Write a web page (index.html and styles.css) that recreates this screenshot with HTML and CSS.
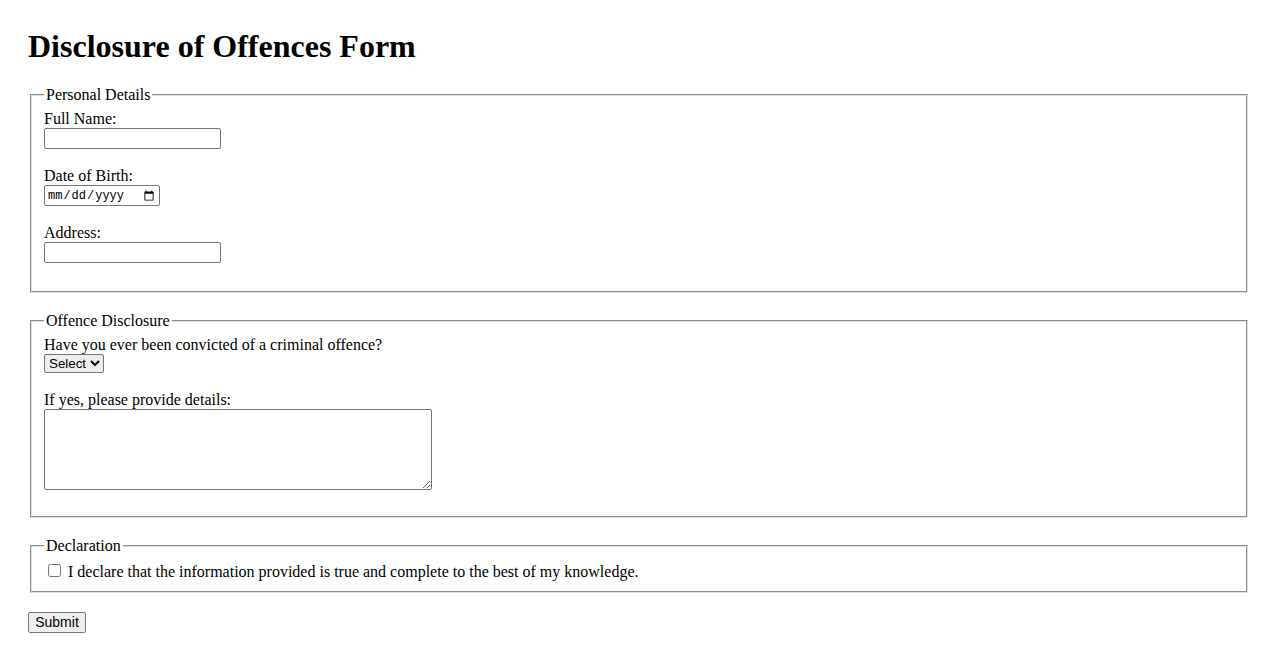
FILE: index.html
```html
<!DOCTYPE html>
<html lang="en">
<head>
<meta charset="utf-8">
<title>Disclosure of Offences Form</title>
<link rel="stylesheet" href="styles.css">
</head>
<body>
<h1 class="title">Disclosure of Offences Form</h1>
<form class="form">
  <fieldset class="group">
    <legend>Personal Details</legend>
    <label for="name">Full Name:</label><br>
    <input class="text-input" type="text" id="name"><br><br>
    <label for="dob">Date of Birth:</label><br>
    <input class="date-input" type="date" id="dob"><br><br>
    <label for="address">Address:</label><br>
    <input class="text-input" type="text" id="address"><br><br>
  </fieldset>
  <fieldset class="group group-offence">
    <legend>Offence Disclosure</legend>
    <label for="convicted">Have you ever been convicted of a criminal offence?</label><br>
    <select class="select" id="convicted">
      <option>Select</option>
      <option>Yes</option>
      <option>No</option>
    </select><br><br>
    <label for="details">If yes, please provide details:</label><br>
    <textarea class="details" id="details"></textarea><br><br>
  </fieldset>
  <fieldset class="group">
    <legend>Declaration</legend>
    <input class="check" type="checkbox" id="declare">
    <label for="declare">I declare that the information provided is true and complete to the best of my knowledge.</label>
  </fieldset>
  <button class="submit" type="submit">Submit</button>
</form>
</body>
</html>
```

FILE: styles.css
```css
html, body {
  background: #fff;
}
body {
  margin: 0;
  padding: 28px;
  font-family: "Liberation Serif", "Times New Roman", serif;
  font-size: 16px;
  color: #000;
}
.title {
  font-size: 32px;
  margin: 0 0 21px 0;
  line-height: 37px;
}
.group {
  margin: 0 2px 19px 2px;
  padding: 5.6px 12px 10px 12px;
  border: 2px groove #e0e0e0;
}
.group-offence {
  padding-bottom: 8.5px;
}
.group legend {
  padding: 0 2px;
}
.text-input {
  width: 177px;
  height: 21px;
  box-sizing: border-box;
  font-family: "Liberation Sans", Arial, sans-serif;
  font-size: 13.33px;
  border: 1px solid #767676;
  border-radius: 2px;
  padding: 1px 2px;
  margin: 0;
}
.date-input {
  width: 116px;
  height: 21px;
  box-sizing: border-box;
  font-family: "Liberation Mono", monospace;
  font-size: 12px;
  border: 1px solid #767676;
  border-radius: 2px;
  padding: 1px 2px;
  margin: 0;
}
.select {
  font-family: "Liberation Sans", Arial, sans-serif;
  font-size: 13.33px;
  height: 19px;
  padding: 0;
  border: 1px solid #767676;
  border-radius: 2px;
  margin: 0;
}
.details {
  width: 388px;
  height: 81px;
  box-sizing: border-box;
  font-family: "Liberation Mono", monospace;
  font-size: 13.33px;
  border: 1px solid #767676;
  border-radius: 2px;
  margin: 0;
  vertical-align: bottom;
}
.check {
  width: 13px;
  height: 13px;
  margin: 3px 3px 3px 4px;
}
.submit {
  font-family: "Liberation Sans", Arial, sans-serif;
  font-size: 14px;
  width: 58px;
  height: 21px;
  padding: 1px 6px;
  border: 1px solid #767676;
  border-radius: 2px;
  background: #efefef;
  margin: 0;
}
```
